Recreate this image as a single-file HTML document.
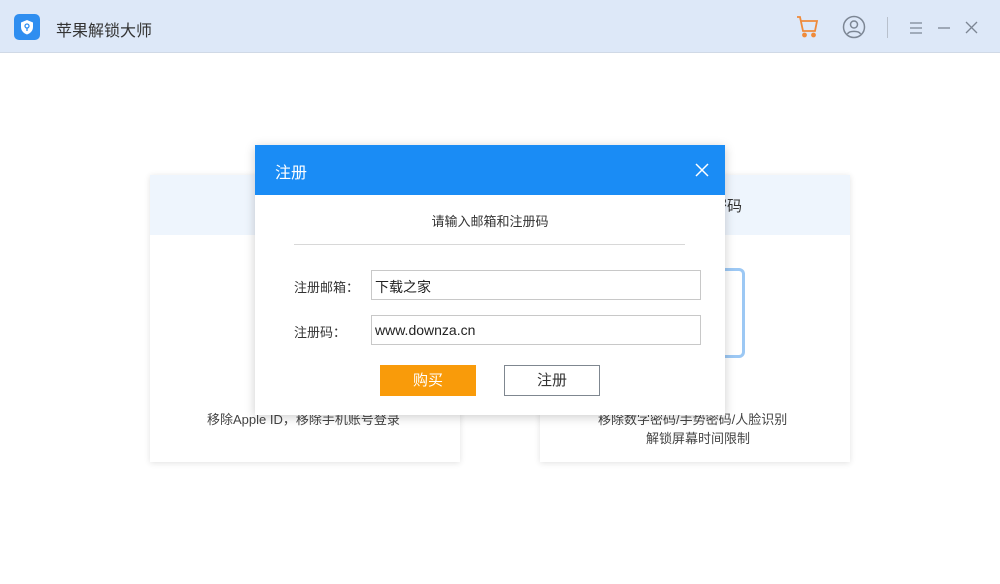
<!DOCTYPE html>
<html><head><meta charset="utf-8"><style>
*{margin:0;padding:0;box-sizing:border-box}
body{width:1000px;height:584px;background:#fff;font-family:"Liberation Sans","Noto Sans CJK SC",sans-serif;position:relative;overflow:hidden;color:#333}
.bar{position:absolute;left:0;top:0;width:1000px;height:53px;background:#dde8f8;border-bottom:1px solid #d0d9e6}
.card{position:absolute;top:175px;width:310px;height:287px;background:#fff;box-shadow:0 1px 6px rgba(0,0,0,.12)}
.card .hd{height:60px;background:#eef5fd}
.t{position:absolute;font-size:13px;color:#444;white-space:nowrap}
.dlg{position:absolute;left:255px;top:145px;width:470px;height:270px;background:#fff;box-shadow:0 2px 10px rgba(0,0,0,.2);z-index:5}
.dh{height:50px;background:#1a8cf5;color:#fff;font-size:16px;padding:14px 0 0 20px}
.in{position:absolute;left:116px;width:330px;height:30px;border:1px solid #c8c8c8;font-size:14px;padding:6px 3px;color:#222}
.lb{position:absolute;left:39px;font-size:13px;color:#333}
</style></head><body>
<div class="bar">
<div style="position:absolute;left:14px;top:14px;width:26px;height:26px;border-radius:5px;background:#2f8ef0"></div>
<svg style="position:absolute;left:14px;top:14px" width="26" height="26"><path d="M13 6 L19 8.5 V13 C19 17 16 19.5 13 20.5 C10 19.5 7 17 7 13 V8.5 Z" fill="#fff"/><circle cx="13" cy="12" r="2" fill="none" stroke="#2f8ef0" stroke-width="1.3"/><path d="M13 14 V17" stroke="#2f8ef0" stroke-width="1.3"/></svg>
<div style="position:absolute;left:56px;top:17px;font-size:16px;color:#333">苹果解锁大师</div>
<svg style="position:absolute;left:795px;top:14px" width="26" height="26" fill="none" stroke="#ef8a3a" stroke-width="1.8"><path d="M2 3 H5 L8 17 H20 L22 7 H6"/><circle cx="9.5" cy="21" r="1.5" fill="#ef8a3a"/><circle cx="18.5" cy="21" r="1.5" fill="#ef8a3a"/></svg>
<svg style="position:absolute;left:842px;top:15px" width="24" height="24" fill="none" stroke="#7c8694" stroke-width="1.5"><circle cx="12" cy="12" r="10.5"/><circle cx="12" cy="9.5" r="3.5"/><path d="M5.5 19 C7 15.5 17 15.5 18.5 19"/></svg>
<div style="position:absolute;left:887px;top:17px;width:1px;height:21px;background:#b8c0cc"></div>
<svg style="position:absolute;left:908px;top:20px" width="70" height="16" fill="none" stroke="#7c8694" stroke-width="1.3"><path d="M2 3H14M2 8H14M2 13H14"/><path d="M30 8H42"/><path d="M58 2L69 13M69 2L58 13"/></svg>
</div>
<div class="card" style="left:150px"><div class="hd"></div></div>
<div class="card" style="left:540px"><div class="hd"></div>
<div style="position:absolute;left:112px;top:20px;font-size:15px;color:#333">解锁屏幕密码</div>
<div style="position:absolute;left:175px;top:93px;width:30px;height:90px;border:3px solid #9cc8f4;border-left:none;border-radius:0 6px 6px 0"></div>
</div>
<div class="t" style="left:207px;top:409px">移除Apple ID，移除手机账号登录</div>
<div class="t" style="left:598px;top:409px">移除数字密码/手势密码/人脸识别</div>
<div class="t" style="left:646px;top:428px">解锁屏幕时间限制</div>
<div class="dlg">
<div class="dh">注册</div>
<svg style="position:absolute;left:440px;top:18px" width="14" height="14" stroke="#fff" stroke-width="1.5"><path d="M1 1L13 13M13 1L1 13"/></svg>
<div style="position:absolute;left:0;width:470px;top:66px;text-align:center;font-size:13px">请输入邮箱和注册码</div>
<div style="position:absolute;left:39px;top:99px;width:391px;height:1px;background:#d8d8d8"></div>
<div class="lb" style="top:132px">注册邮箱：</div>
<div class="in" style="top:125px">下载之家</div>
<div class="lb" style="top:177px">注册码：</div>
<div class="in" style="top:170px">www.downza.cn</div>
<div style="position:absolute;left:125px;top:220px;width:96px;height:31px;background:#f99b0a;color:#fff;font-size:15px;text-align:center;line-height:31px">购买</div>
<div style="position:absolute;left:249px;top:220px;width:96px;height:31px;border:1px solid #7f8790;font-size:15px;text-align:center;line-height:29px">注册</div>
</div>
</body></html>
